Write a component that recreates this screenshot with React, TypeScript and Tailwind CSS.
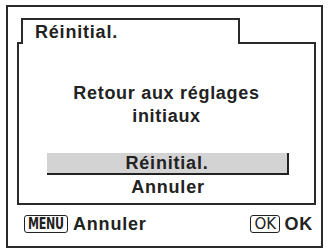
export default function App() {
  return (
    <div className="w-[329px] h-[248px] bg-white pl-[6px] pt-[5px] text-[#222] font-['Liberation_Sans',Arial,sans-serif]">
      {/* Outer frame */}
      <div className="w-[317px] h-[243px] border-2 border-[#2a2a2a] flex flex-col">
        <div className="pt-[11px] pl-[9px] pr-[5px]">
          {/* Tab */}
          <div className="relative z-10 ml-[4px] -mb-[2px] w-[219px] h-[26px] bg-white border-t-2 border-x-2 border-[#2a2a2a] pl-[12px] pt-[2px]">
            <div className="text-[18px] leading-[20px] font-bold tracking-[0.8px]">Réinitial.</div>
          </div>
          {/* Panel */}
          <div className="h-[163px] border-2 border-[#2a2a2a] pt-[38px] flex flex-col">
            <div className="text-center text-[18px] leading-[23px] font-bold tracking-[0.7px]">
              Retour aux réglages
              <br />
              initiaux
            </div>
            <div className="mt-[25px] ml-[28px] w-[242px] flex flex-col">
              <div className="h-[22px] bg-[#d3d3d3] border-b-2 border-r-2 border-[#222] text-center text-[18px] leading-[20px] font-bold tracking-[0.8px]">
                Réinitial.
              </div>
              <div className="mt-[2px] text-center text-[18px] leading-[20px] font-bold tracking-[0.8px]">
                Annuler
              </div>
            </div>
          </div>
        </div>
        {/* Bottom hints */}
        <div className="mt-[9px] h-[20px] pl-[16px] pr-[8px] flex items-center justify-between">
          <div className="flex items-center gap-[5px]">
            <span className="h-[18px] w-[44px] rounded-[3px] border border-[#222] flex items-center justify-center overflow-hidden">
              <span className="inline-block text-[15px] leading-none font-bold tracking-[-0.3px] font-['DejaVu_Sans_Condensed','DejaVu_Sans',sans-serif] [font-stretch:condensed] scale-x-[0.82]">
                MENU
              </span>
            </span>
            <span className="text-[18px] leading-[20px] font-bold tracking-[0.8px]">Annuler</span>
          </div>
          <div className="flex items-center gap-[4px]">
            <span className="h-[18px] w-[30px] rounded-[3px] border border-[#222] flex items-center justify-center text-[15px] leading-none font-['DejaVu_Sans',sans-serif]">
              OK
            </span>
            <span className="text-[18px] leading-[20px] font-bold tracking-[0.8px]">OK</span>
          </div>
        </div>
      </div>
    </div>
  );
}
